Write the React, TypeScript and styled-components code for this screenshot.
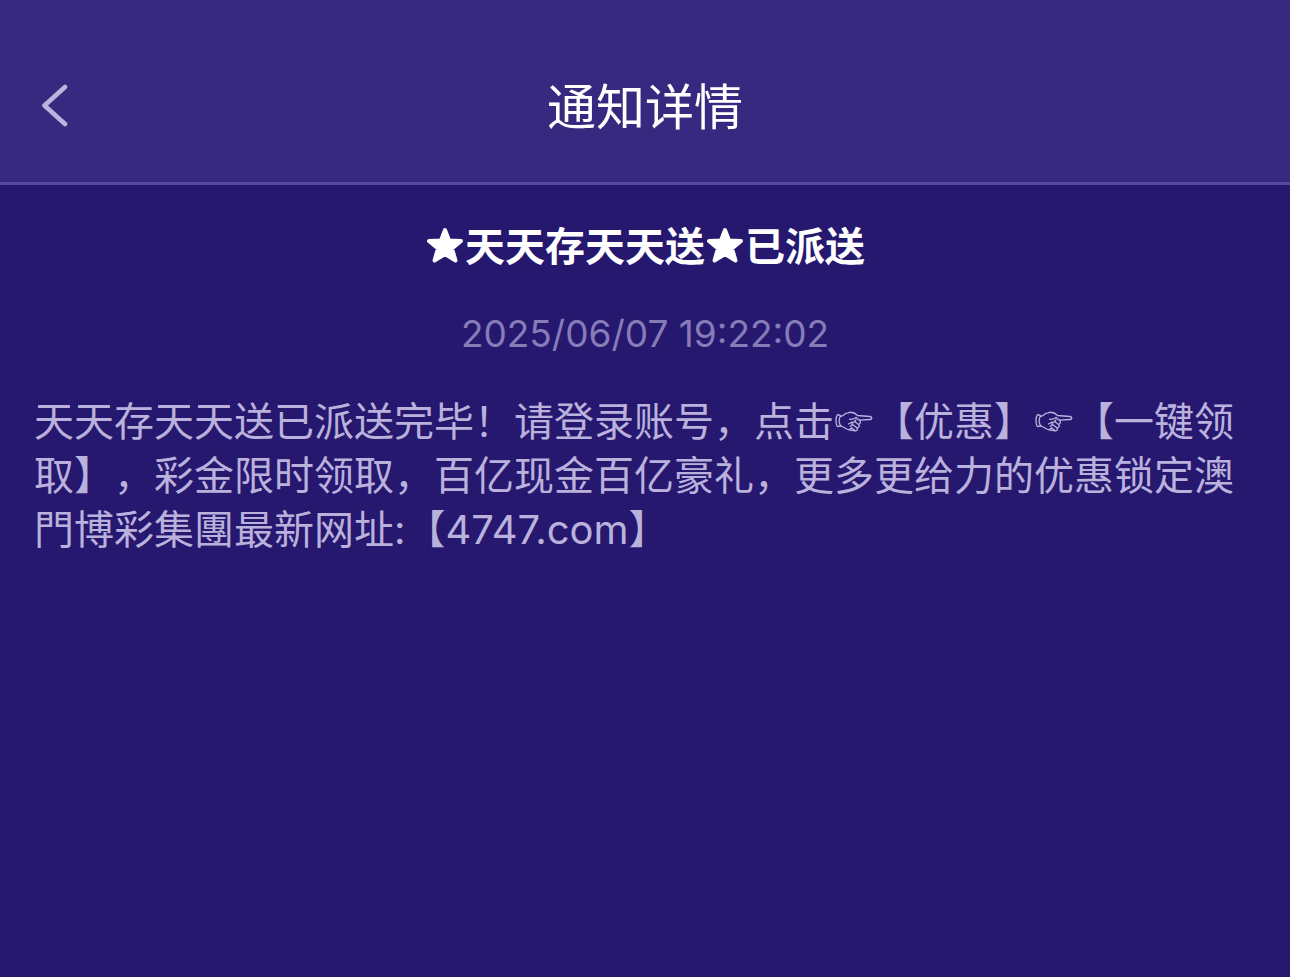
import React from "react";
import styled, { createGlobalStyle } from "styled-components";

const GlobalStyle = createGlobalStyle`
  * { box-sizing: border-box; }
  body {
    margin: 0;
    background: #26186f;
    font-family: Inter, "Noto Sans CJK SC", sans-serif;
    text-spacing-trim: space-all;
  }
`;

const Header = styled.header`
  display: grid;
  grid-template-columns: 80px 1fr 80px;
  align-items: center;
  padding: 72px 16px 38px;
  background: #37297f;
  border-bottom: 3px solid #5848a0;
`;

const BackButton = styled.button`
  display: flex;
  align-items: center;
  padding: 0 24px 6px;
  height: 72px;
  border: 0;
  background: none;
  color: #bdb3df;
  cursor: pointer;
`;

const PageTitle = styled.h1`
  margin: 0;
  color: #ffffff;
  font-size: 49px;
  line-height: 72px;
  font-weight: 400;
  text-align: center;
`;

const Article = styled.article`
  padding: 32px 34px;
`;

const NoticeTitle = styled.h2`
  margin: 0;
  color: #ffffff;
  font-size: 40px;
  line-height: 60px;
  font-weight: 700;
  text-align: center;
`;

const NoticeTime = styled.time`
  display: block;
  margin: 27px 0 31px;
  color: #867cb8;
  font-size: 37px;
  line-height: 60px;
  text-align: center;
`;

const NoticeBody = styled.p`
  margin: 0;
  color: #bab1dc;
  font-size: 40px;
  line-height: 54px;
`;

const InlineSymbol = styled.svg`
  width: 40px;
  height: 40px;
  vertical-align: -6px;
  stroke: currentColor;
  stroke-linecap: round;
  stroke-linejoin: round;
`;

function Star() {
  return (
    <InlineSymbol viewBox="0 2 40 40" role="img" aria-label="★" fill="currentColor" strokeWidth="4">
      <path d="M20 5 L24 15.500 L36 16 L27 23.500 L30.500 35.500 L20 29 L9.500 35.500 L13 23.500 L4 16 L16 15.500 Z" />
    </InlineSymbol>
  );
}

function Hand() {
  return (
    <InlineSymbol viewBox="0 0 40 40" role="img" aria-label="☞" fill="none" strokeWidth="1.3">
      <path d="M6.500 13.500 L3.500 12.700 C1.500 15 1.500 21 3.300 24.500 L6.700 24 C4.800 21 4.800 17 6.500 13.500 Z" />
      <path d="M6.500 14.500 C9 14.500 10.500 10.800 14 10.800 C17 9.700 20.500 10.500 23.500 13.500 L36 14.500 C38.500 15 38.300 17.300 36 17.500 L25.500 18.200" />
      <path d="M6.700 24 C9 24 11.500 27.500 16 28 L21.500 28.800 C23.500 28.500 24 27 22.800 25.800 C25 26 26 24 24.700 22.500 C27 21.500 26.800 19 25.500 18.200 L22 15.500 C20 17 17.500 17.500 15.500 17.200" />
      <path d="M18 21.500 L20.500 19.500 L24.700 22.500 M16.500 24.300 L18.500 22.500 L22.800 25.800 M16 27 L17.500 25.800 L21 28.500 M20.500 19.500 L22 18 M14.500 22 L18 20" />
    </InlineSymbol>
  );
}

export default function App() {
  return (
    <>
      <GlobalStyle />
      <Header>
        <BackButton type="button" aria-label="返回">
          <svg
            width="30"
            height="44"
            viewBox="0 0 30 44"
            fill="none"
            stroke="currentColor"
            strokeWidth="4.6"
            strokeLinecap="round"
            strokeLinejoin="round"
          >
            <path d="M25 4 4.500 22.500 25 41" />
          </svg>
        </BackButton>
        <PageTitle>通知详情</PageTitle>
      </Header>
      <main>
        <Article>
          <NoticeTitle>
            <Star />天天存天天送<Star />已派送
          </NoticeTitle>
          <NoticeTime dateTime="2025-06-07T19:22:02">2025/06/07 19:22:02</NoticeTime>
          <NoticeBody>
            天天存天天送已派送完毕！请登录账号，点击<Hand />【优惠】<Hand />
            【一键领取】，彩金限时领取，百亿现金百亿豪礼，更多更给力的优惠锁定澳門博彩集團最新网址:【4747.com】
          </NoticeBody>
        </Article>
      </main>
    </>
  );
}
